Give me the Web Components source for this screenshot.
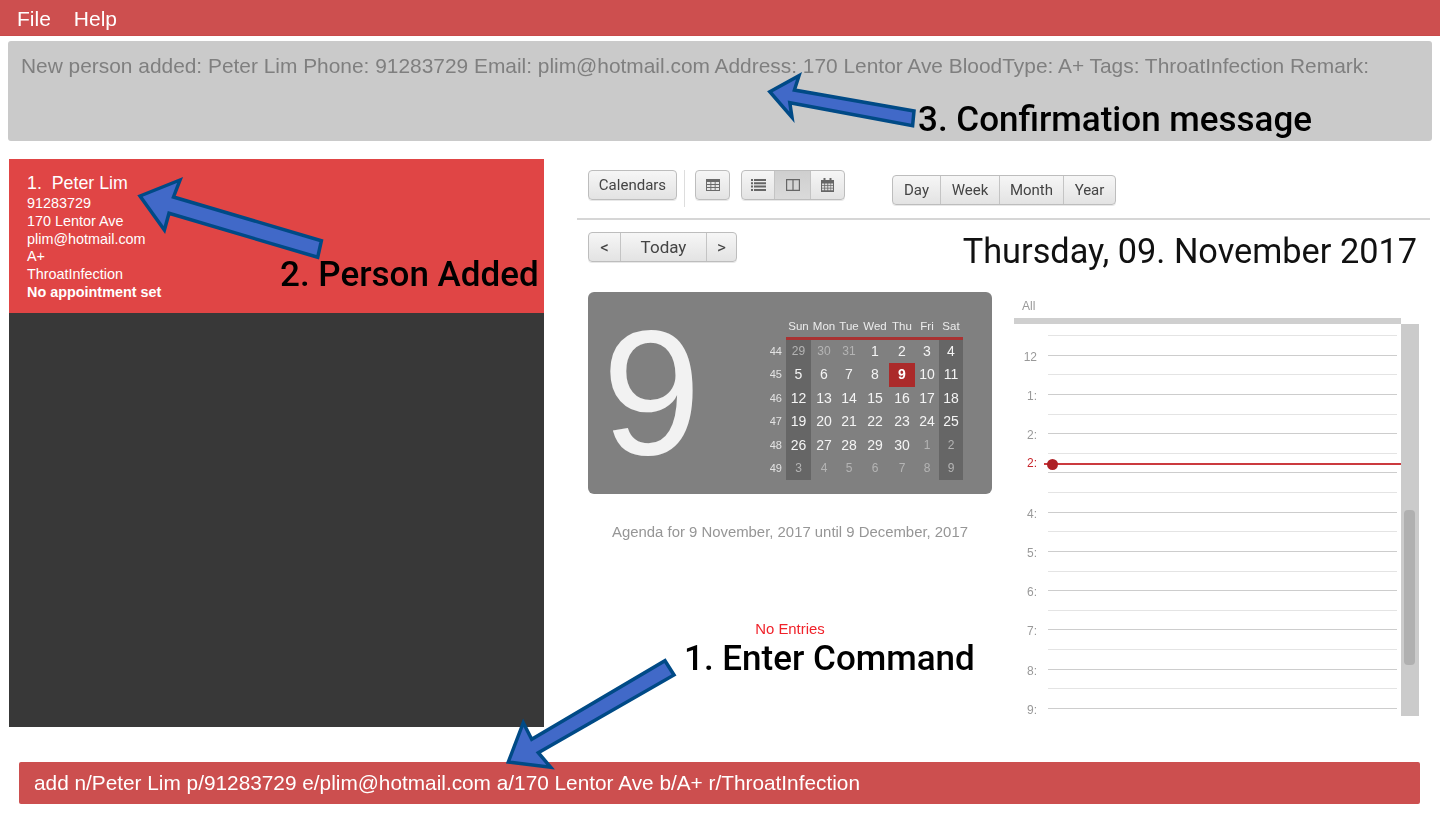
<!DOCTYPE html>
<html>
<head>
<meta charset="utf-8">
<title>Address book</title>
<style>
html, body { margin: 0; padding: 0; background: #fff; }
body { width: 1440px; height: 828px; overflow: hidden; position: relative; font-family: "Liberation Sans", sans-serif; }
.main { display: flex; margin-top: 18px; height: 568px; }
/* the app part of the reference is a slightly soft capture */
app-menu, result-box, .main, command-box { filter: blur(.4px); }
</style>
</head>
<body>
<app-menu><span>File</span><span>Help</span></app-menu>
<result-box>New person added: Peter Lim Phone: 91283729 Email: plim@hotmail.com Address: 170 Lentor Ave BloodType: A+ Tags: ThroatInfection Remark:</result-box>
<div class="main">
  <person-panel>
    <person-card name="Peter Lim" index="1" phone="91283729" address="170 Lentor Ave" email="plim@hotmail.com" blood="A+" tags="ThroatInfection" appt="No appointment set"></person-card>
  </person-panel>
  <calendar-panel></calendar-panel>
</div>
<command-box>add n/Peter Lim p/91283729 e/plim@hotmail.com a/170 Lentor Ave b/A+ r/ThroatInfection</command-box>
<callout-layer></callout-layer>

<script>
class AppMenu extends HTMLElement {
    constructor() {
        super()
        this.attachShadow({mode: 'open'})
        this.shadowRoot.innerHTML = `
        <style>
        :host { display: flex; align-items: center; gap: 23px; height: 36px; padding: 2px 17px 0; box-sizing: border-box;
            background: #cd4f4f; color: #fff; font: 21px "Liberation Sans", sans-serif; border-bottom: 1px solid #c94a4a }
        </style>
        <slot></slot>`
    }
}
customElements.define('app-menu', AppMenu)

class ResultBox extends HTMLElement {
    constructor() {
        super()
        this.attachShadow({mode: 'open'})
        this.shadowRoot.innerHTML = `
        <style>
        :host { display: block; height: 100px; margin: 5px 8px 0; padding: 13px 13px 0; box-sizing: border-box;
            background: #cacaca; border-radius: 3px; color: #7f7f7f; white-space: nowrap;
            font: 20.9px/24px "Liberation Sans", sans-serif }
        </style>
        <slot></slot>`
    }
}
customElements.define('result-box', ResultBox)

class PersonPanel extends HTMLElement {
    constructor() {
        super()
        this.attachShadow({mode: 'open'})
        this.shadowRoot.innerHTML = `
        <style>
        :host { display: block; width: 535px; margin-left: 9px; background: #383838 }
        </style>
        <slot></slot>`
    }
}
customElements.define('person-panel', PersonPanel)

class PersonCard extends HTMLElement {
    connectedCallback() {
        const a = n => this.getAttribute(n)
        this.attachShadow({mode: 'open'})
        this.shadowRoot.innerHTML = `
        <style>
        :host { display: block; height: 154px; padding: 14px 18px 0; box-sizing: border-box; background: #e04545; color: #fff;
            font: 14.4px/17.8px "Liberation Sans", sans-serif }
        .name { font-size: 17.8px; line-height: 22px; margin-top: -1px; padding-bottom: 1px; white-space: pre }
        b { display: block }
        </style>
        <div class="name">${a('index')}.  ${a('name')}</div>
        <div>${a('phone')}</div>
        <div>${a('address')}</div>
        <div>${a('email')}</div>
        <div>${a('blood')}</div>
        <div>${a('tags')}</div>
        <b>${a('appt')}</b>`
    }
}
customElements.define('person-card', PersonCard)

const icons = {
    table: `<svg width="14" height="12" viewBox="0 0 14 12"><path fill="#6a6a6a" d="M0 0h14v12H0z"/><path fill="#e6e6e6" d="M1 3h3.4v2H1zM5.3 3h3.4v2H5.3zM9.6 3H13v2H9.6zM1 6h3.4v2H1zM5.3 6h3.4v2H5.3zM9.6 6H13v2H9.6zM1 9h3.4v2H1zM5.3 9h3.4v2H5.3zM9.6 9H13v2H9.6z"/></svg>`,
    list: `<svg width="15" height="12" viewBox="0 0 15 12"><path fill="#666" d="M0 0h2v2H0zM3 0h12v2H3zM0 3.3h2v2H0zM3 3.3h12v2H3zM0 6.6h2v2H0zM3 6.6h12v2H3zM0 10h2v2H0zM3 10h12v2H3z"/></svg>`,
    columns: `<svg width="14" height="12" viewBox="0 0 14 12"><path fill="none" stroke="#666" stroke-width="1.2" d="M.6.6h12.8v10.8H.6zM7 .6v10.8"/></svg>`,
    cal: `<svg width="13" height="14" viewBox="0 0 13 14"><path fill="#666" d="M0 2h13v12H0z"/><path fill="#666" d="M2.5 0h2v3h-2zM8.500 0h2v3h-2z"/><path fill="#ddd" d="M1 5.500h2.300v1.700H1zM4.100 5.500h2.300v1.700H4.100zM7.200 5.500h2.300v1.700H7.200zM10.100 5.500H12v1.700h-1.900zM1 8h2.300v1.700H1zM4.100 8h2.300v1.700H4.100zM7.200 8h2.300v1.700H7.200zM10.100 8H12v1.700h-1.900zM1 10.500h2.300v1.700H1zM4.100 10.500h2.300v1.700H4.100zM7.200 10.500h2.300v1.700H7.200zM10.100 10.500H12v1.700h-1.900z"/></svg>`
}

// row of joined buttons, labels come from the slots
class BtnGroup extends HTMLElement {
    constructor() {
        super()
        this.attachShadow({mode: 'open'})
        this.shadowRoot.innerHTML = `
        <style>
        :host { display: inline-flex; height: 30px; box-sizing: border-box; border: 1px solid #bdbdbd; border-radius: 4px;
            overflow: hidden; background: linear-gradient(#f6f6f6, #e3e3e3); color: #444; font: 15px "Roboto", sans-serif;
            box-shadow: 0 1px 0 #e8e8e8 }
        ::slotted(*) { display: flex; align-items: center; justify-content: center; box-sizing: border-box; height: 100%; border-left: 1px solid #c4c4c4 }
        ::slotted(:first-child) { border-left: 0 }
        ::slotted(.on) { background: linear-gradient(#cfcfcf, #dadada) }
        </style>
        <slot></slot>`
    }
}
customElements.define('btn-group', BtnGroup)

class CalToolbar extends HTMLElement {
    constructor() {
        super()
        this.attachShadow({mode: 'open'})
        this.shadowRoot.innerHTML = `
        <style>
        :host { display: flex; height: 48px; padding: 11px 0 0 11px; box-sizing: content-box; align-items: flex-start; border-bottom: 2px solid #d6d6d6 }
        .sep { width: 1px; height: 37px; background: #ddd; margin: 0 10px 0 7px }
        span { display: flex }
        </style>
        <btn-group><span style="width:87px">Calendars</span></btn-group>
        <div class="sep"></div>
        <btn-group style="margin-right:11px"><span style="width:33px">${icons.table}</span></btn-group>
        <btn-group style="margin-right:47px"><span style="width:32px">${icons.list}</span><span class="on" style="width:36px">${icons.columns}</span><span style="width:34px">${icons.cal}</span></btn-group>
        <btn-group style="margin-top:5px"><span style="width:47px">Day</span><span style="width:59px">Week</span><span style="width:64px">Month</span><span style="width:52px">Year</span></btn-group>`
    }
}
customElements.define('cal-toolbar', CalToolbar)

class CalNav extends HTMLElement {
    constructor() {
        super()
        this.attachShadow({mode: 'open'})
        this.shadowRoot.innerHTML = `
        <style>
        :host { display: flex; justify-content: space-between; align-items: flex-start; padding: 12px 13px 0 11px; box-sizing: content-box; height: 48px }
        btn-group { font-size: 17px }
        h1 { margin: 1px 0 0; font: 400 34.3px/36px "Roboto", sans-serif; color: #111; white-space: nowrap }
        span { display: flex }
        </style>
        <btn-group><span style="width:31px">&lt;</span><span style="width:86px">Today</span><span style="width:30px">&gt;</span></btn-group>
        <h1>Thursday, 09. November 2017</h1>`
    }
}
customElements.define('cal-nav', CalNav)

class MonthCard extends HTMLElement {
    constructor() {
        super()
        this.attachShadow({mode: 'open'})
        const weeks = [
            [44, 29, 30, 31, 1, 2, 3, 4],
            [45, 5, 6, 7, 8, 9, 10, 11],
            [46, 12, 13, 14, 15, 16, 17, 18],
            [47, 19, 20, 21, 22, 23, 24, 25],
            [48, 26, 27, 28, 29, 30, 1, 2],
            [49, 3, 4, 5, 6, 7, 8, 9]
        ]
        let cells = ''
        weeks.forEach((w, r) => {
            w.forEach((d, c) => {
                if (c == 0) { cells += `<div class="wk">${d}</div>`; return }
                const other = (r == 0 && c < 4) || (r == 4 && c > 5) || r == 5
                let cls = 'day'
                if (other) cls += ' other'
                if (c == 1 || c == 7) cls += ' end'
                if (r == 1 && c == 5) cls += ' today'
                cells += `<div class="${cls}">${d}</div>`
            })
        })
        this.shadowRoot.innerHTML = `
        <style>
        :host { display: flex; justify-content: space-between; height: 202px; width: 404px; box-sizing: border-box; background: #808080;
            border-radius: 6px; padding: 24px 29px 0 14px; font-family: "Liberation Sans", sans-serif }
        .big { font-size: 178px; line-height: 150px; height: 150px; margin-top: 2px; color: #f2f2f2 }
        .grid { display: grid; height: 164px; grid-template-columns: 28px 25px 26px 24px 28px 26px 24px 24px;
            grid-template-rows: 24px repeat(6, 23.4px); text-align: center }
        .hd { color: #ececec; font-size: 11.5px; line-height: 20px; border-bottom: 3px solid #a93232; height: 21px; white-space: nowrap }
        .wk { color: #e2e2e2; font-size: 11px; line-height: 23px; padding-right: 4px; text-align: right }
        .day { color: #f4f4f4; font-size: 14px; line-height: 23.4px }
        .other { color: #b4b4b4; font-size: 12px }
        .end { background: #666 }
        .today { background: #ab2a2a; color: #fff; font-weight: bold }
        </style>
        <div class="big">9</div>
        <div class="grid">
            <div></div>
            ${['Sun', 'Mon', 'Tue', 'Wed', 'Thu', 'Fri', 'Sat'].map(d => `<div class="hd">${d}</div>`).join('')}
            ${cells}
        </div>`
    }
}
customElements.define('month-card', MonthCard)

class AgendaView extends HTMLElement {
    constructor() {
        super()
        this.attachShadow({mode: 'open'})
        this.shadowRoot.innerHTML = `
        <style>
        :host { display: block; text-align: center; color: #969696; font: 14.9px/18px "Liberation Sans", sans-serif; white-space: nowrap }
        .title { margin-top: 29px }
        .none { margin-top: 79px; color: #f0222a }
        </style>
        <div class="title">Agenda for 9 November, 2017 until 9 December, 2017</div>
        <div class="none">No Entries</div>`
    }
}
customElements.define('agenda-view', AgendaView)

class DayView extends HTMLElement {
    constructor() {
        super()
        this.attachShadow({mode: 'open'})
        const labels = ['12', '1:', '2:', '', '4:', '5:', '6:', '7:', '8:', '9:']
        const rows = labels.map(l => `
            <div class="slice half"></div>
            <div class="lbl">${l}</div>
            <div class="slice"></div>`).join('')
        this.shadowRoot.innerHTML = `
        <style>
        :host { display: block; width: 405px; margin-top: 6px; font: 12px "Liberation Sans", sans-serif; color: #999 }
        .all { height: 20px; line-height: 17px; padding-left: 8px }
        .bar { width: 387px; height: 6px; background: #cfcfcf }
        .body { display: flex; height: 392px }
        .scroll { position: relative; width: 387px; padding-top: 11px; box-sizing: border-box }
        .rows { display: grid; grid-template-columns: 34px 349px; grid-auto-rows: 19.63px; height: 381px }
        .slice { grid-column: 2; border-top: 1px solid #cdcdcd; box-sizing: border-box }
        .half { border-top-color: #e4e4e4 }
        .lbl { grid-column: 1; text-align: right; padding-right: 11px; line-height: 14px; margin-top: -5px }
        .now { position: absolute; left: 30px; right: 0; top: 139px; height: 2px; background: #cb3a3f }
        .dot { position: absolute; left: 3px; top: -4px; width: 11px; height: 11px; border-radius: 50%; background: #ae2025 }
        .nowl { position: absolute; right: 364px; top: 132px; color: #c8252b; line-height: 14px; background: #fff }
        .track { width: 18px; background: #cbcbcb; padding-top: 186px; box-sizing: border-box }
        .thumb { width: 11px; height: 155px; margin-left: 3px; border-radius: 4px; background: #b0b0b0 }
        </style>
        <div class="all">All</div>
        <div class="bar"></div>
        <div class="body">
            <div class="scroll">
                <div class="rows">${rows}</div>
                <div class="nowl">2:</div>
                <div class="now"><div class="dot"></div></div>
            </div>
            <div class="track"><div class="thumb"></div></div>
        </div>`
    }
}
customElements.define('day-view', DayView)

class CalendarPanel extends HTMLElement {
    constructor() {
        super()
        this.attachShadow({mode: 'open'})
        this.shadowRoot.innerHTML = `
        <style>
        :host { display: block; width: 853px; margin-left: 33px }
        .content { display: flex; gap: 22px; padding-left: 11px; margin-top: 12px }
        .col { width: 404px }
        </style>
        <cal-toolbar></cal-toolbar>
        <cal-nav></cal-nav>
        <div class="content">
            <div class="col">
                <month-card></month-card>
                <agenda-view></agenda-view>
            </div>
            <day-view></day-view>
        </div>`
    }
}
customElements.define('calendar-panel', CalendarPanel)

class CommandBox extends HTMLElement {
    constructor() {
        super()
        this.attachShadow({mode: 'open'})
        this.shadowRoot.innerHTML = `
        <style>
        :host { display: flex; align-items: center; height: 42px; margin: 35px 20px 0 19px; padding-left: 15px; box-sizing: border-box;
            background: #cc4f4f; border-radius: 2px; color: #fff; font: 20.8px "Liberation Sans", sans-serif; white-space: nowrap }
        </style>
        <slot></slot>`
    }
}
customElements.define('command-box', CommandBox)

// annotation arrows and labels lying over the screenshot
class CalloutLayer extends HTMLElement {
    constructor() {
        super()
        this.attachShadow({mode: 'open'})
        this.shadowRoot.innerHTML = `
        <style>
        :host { display: block; position: absolute; left: 0; top: 0; width: 1440px; height: 828px; pointer-events: none }
        svg { position: absolute; left: 0; top: 0 }
        polygon { fill: #4169c8; stroke: #004a86; stroke-width: 3.5 }
        .t { position: absolute; color: #000; font: 500 35px/40px "Roboto", sans-serif; white-space: nowrap }
        </style>
        <svg width="1440" height="828">
            <polygon points="140,196 180,180 173.500,197 321.400,240.700 317.700,257.300 169,213.300 164.400,230"/>
            <polygon points="665,660.700 674,675 538.300,752.700 550.700,767.300 508.300,762 523.300,722.700 531.700,739.300"/>
            <polygon points="769.800,91.700 799,75.700 794.400,90 914,111 912.600,125.700 789.800,102.700 792,117.300"/>
        </svg>
        <div class="t" style="left:918px;top:100px">3. Confirmation message</div>
        <div class="t" style="left:280px;top:255px">2. Person Added</div>
        <div class="t" style="left:684px;top:639px">1. Enter Command</div>`
    }
}
customElements.define('callout-layer', CalloutLayer)
</script>
</body>
</html>
